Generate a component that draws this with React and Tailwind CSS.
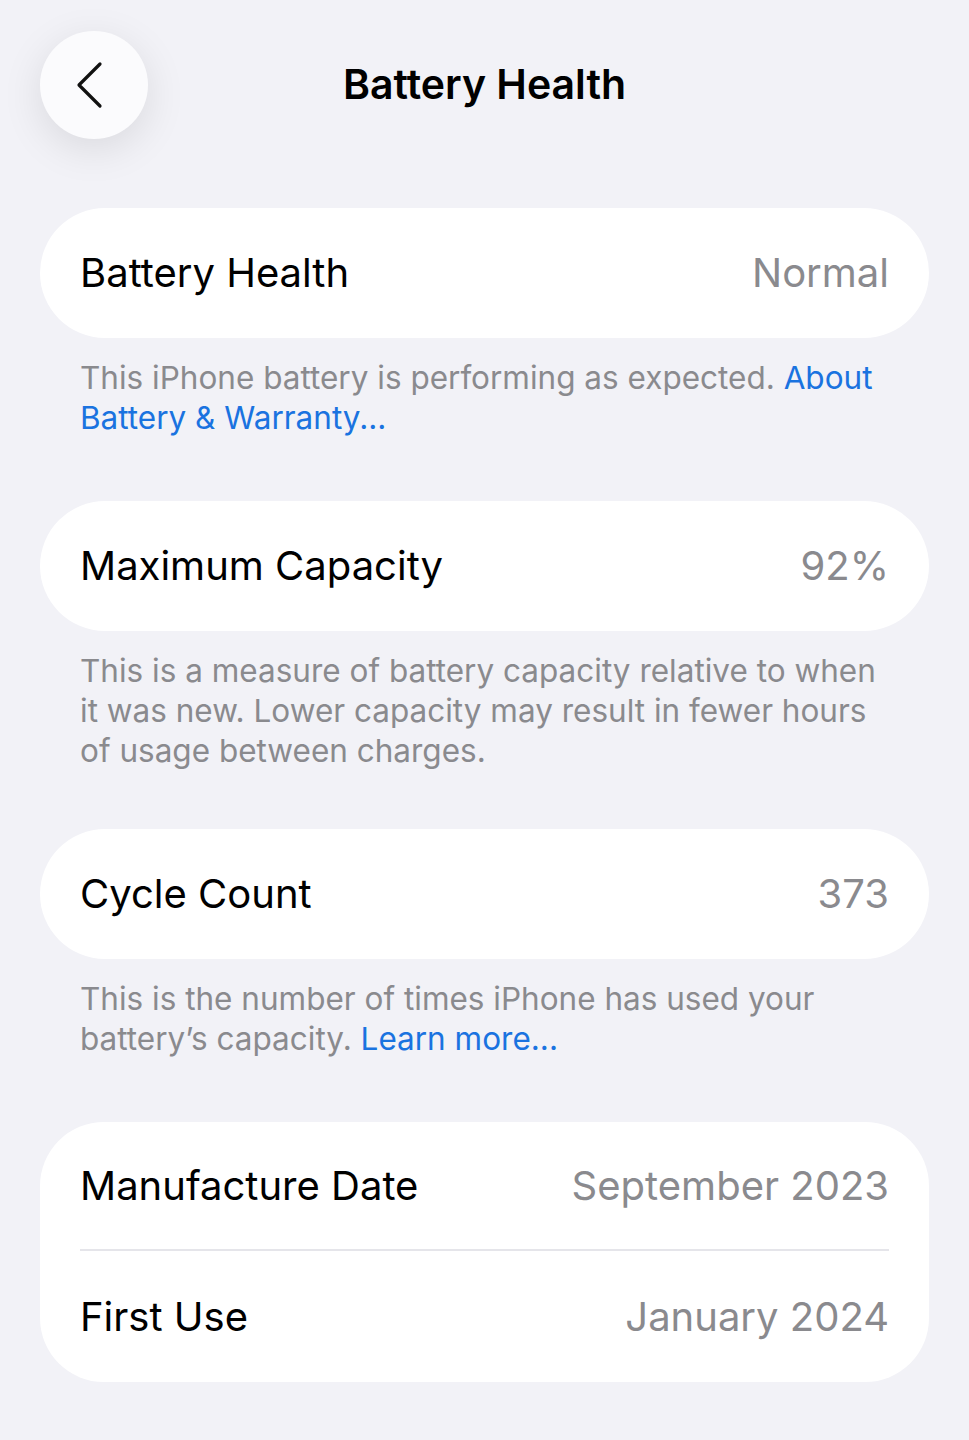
export default function App() {
  const rows = [
    {
      label: 'Battery Health',
      value: 'Normal',
      gap: 'mb-[63px]',
      note: (
        <>
          This iPhone battery is performing as expected.{' '}
          <span className="text-[#1a73e0]">About Battery &amp; Warranty...</span>
        </>
      ),
    },
    {
      label: 'Maximum Capacity',
      value: '92%',
      gap: 'mb-[58px]',
      note: 'This is a measure of battery capacity relative to when it was new. Lower capacity may result in fewer hours of usage between charges.',
    },
    {
      label: 'Cycle Count',
      value: '373',
      gap: 'mb-[63px]',
      note: (
        <>
          This is the number of times iPhone has used your battery’s capacity.{' '}
          <span className="text-[#1a73e0]">Learn more...</span>
        </>
      ),
    },
  ]

  return (
    <div className="min-h-screen bg-[#f2f2f7] px-10 pt-[31px] pb-10" style={{ fontFamily: 'Inter, "Noto Sans", sans-serif' }}>
      {/* Header */}
      <div className="relative flex items-center h-[108px]">
        <button className="w-[108px] h-[108px] rounded-full bg-[#fbfbfd] flex items-center justify-center shadow-[0_10px_40px_rgba(0,0,0,0.10)]">
          <svg width="30" height="48" viewBox="0 0 30 48" fill="none" className="-ml-2">
            <path d="M25 3 L4 24 L25 45" stroke="#111" strokeWidth="3.2" strokeLinecap="round" strokeLinejoin="round" />
          </svg>
        </button>
        <h1 className="absolute left-1/2 -translate-x-1/2 text-[41px] font-semibold text-black whitespace-nowrap">
          Battery Health
        </h1>
      </div>

      <div className="mt-[69px] flex flex-col">
        {rows.map((r, i) => (
          <div key={i} className={r.gap}>
            <div className="h-[130px] rounded-full bg-white flex items-center justify-between px-10">
              <span className="text-[40px] text-black">{r.label}</span>
              <span className="text-[40px] text-[#8a8a8e]">{r.value}</span>
            </div>
            <p className="pl-10 pr-9 pt-5 text-[31.5px] leading-[40px] text-[#8a8a8e]">{r.note}</p>
          </div>
        ))}

        <div className="rounded-[64px] bg-white px-10">
          <div className="h-[129px] flex items-center justify-between border-b-2 border-[#e5e5ea]">
            <span className="text-[40px] text-black">Manufacture Date</span>
            <span className="text-[40px] text-[#8a8a8e]">September 2023</span>
          </div>
          <div className="h-[131px] flex items-center justify-between">
            <span className="text-[40px] text-black">First Use</span>
            <span className="text-[40px] text-[#8a8a8e]">January 2024</span>
          </div>
        </div>
      </div>
    </div>
  )
}
